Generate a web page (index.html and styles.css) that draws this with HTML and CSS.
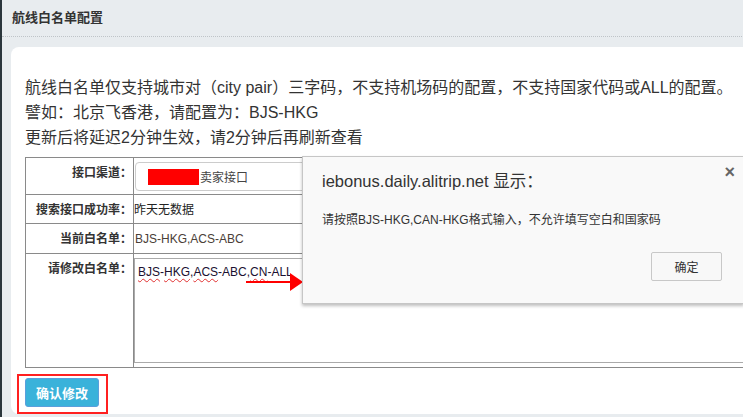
FILE: index.html
```html
<!DOCTYPE html>
<html lang="zh-CN">
<head>
<meta charset="utf-8">
<title>航线白名单配置</title>
<link rel="stylesheet" href="styles.css">
</head>
<body>
<div class="page">
  <div class="header">航线白名单配置</div>
  <div class="card">
    <p class="notes">航线白名单仅支持城市对（city pair）三字码，不支持机场码的配置，不支持国家代码或ALL的配置。<br>譬如：北京飞香港，请配置为：BJS-HKG<br>更新后将延迟2分钟生效，请2分钟后再刷新查看</p>
    <table class="form">
      <tr class="r1">
        <th>接口渠道：</th>
        <td><div class="select"><span class="redact"></span>卖家接口</div></td>
      </tr>
      <tr class="r2">
        <th>搜索接口成功率：</th>
        <td><span class="plain">昨天无数据</span></td>
      </tr>
      <tr class="r3">
        <th>当前白名单：</th>
        <td><span class="current">BJS-HKG,ACS-ABC</span></td>
      </tr>
      <tr class="r4">
        <th>请修改白名单：</th>
        <td><div class="textarea"><span class="sp">BJS</span>-<span class="sp">HKG</span>,<span class="sp">ACS</span>-ABC,<span class="sp">CN</span>-ALL</div></td>
      </tr>
    </table>
    <div class="actions">
      <span class="highlight"><button class="btn-primary">确认修改</button></span>
    </div>
  </div>
</div>

<svg class="arrow" width="60" height="24" viewBox="0 0 60 24">
  <line x1="0" y1="12" x2="46" y2="12" stroke="#ff0000" stroke-width="2"/>
  <polygon points="44,3 57,12 44,21" fill="#ff0000"/>
</svg>

<div class="dialog">
  <div class="dlg-title">iebonus.daily.alitrip.net 显示：</div>
  <span class="dlg-close">×</span>
  <div class="dlg-msg">请按照BJS-HKG,CAN-HKG格式输入，不允许填写空白和国家码</div>
  <div class="dlg-foot"><button class="btn-ok">确定</button></div>
</div>
</body>
</html>
```
FILE: styles.css
```css
html, body {
  margin: 0;
  padding: 0;
  overflow: hidden;
  width: 743px;
  height: 417px;
}
body {
  font-family: "Liberation Sans", "Noto Sans CJK SC", sans-serif;
  color: #333;
  background: #e8ecef;
}
.page {
  border-left: 2px solid #2b363c;
  height: 417px;
  box-sizing: border-box;
  width: 1000px;
}
.header {
  height: 36px;
  line-height: 36px;
  padding-left: 10px;
  font-size: 13px;
  font-weight: bold;
  color: #333;
  border-bottom: 1px dotted #bfc4c8;
}
.card {
  margin: 10px 0 0 9px;
  background: #fff;
  border-radius: 8px;
  padding: 28px 0 0 14px;
  height: 367px;
  box-sizing: border-box;
}
.notes {
  margin: 0;
  font-size: 16px;
  line-height: 25px;
  color: #333;
}
.form {
  margin-top: 7px;
  width: 900px;
  border-collapse: collapse;
  border: 1px solid #333;
  font-size: 12px;
}
.form th, .form td {
  border: 1px solid #8a8a8a;
  padding: 0;
  vertical-align: top;
}
.form th {
  width: 108px;
  text-align: right;
  font-weight: bold;
  padding-right: 1px;
  padding-top: 8px;
  line-height: 14px;
  box-sizing: border-box;
}
.r1 th, .r1 td { height: 36px; }
.r2 th, .r2 td { height: 28px; }
.r3 th, .r3 td { height: 29px; }
.r4 th, .r4 td { height: 113px; }
.select {
  margin: 4px 0 0 1px;
  height: 29px;
  box-sizing: border-box;
  border: 1px solid #ccc;
  border-radius: 4px;
  padding-left: 12px;
  display: flex;
  align-items: center;
  font-size: 12px;
  color: #444;
}
.redact {
  display: inline-block;
  width: 51px;
  height: 16px;
  background: #ff0000;
  margin-right: 1px;
}
.plain {
  display: block;
  padding-top: 8px;
  line-height: 14px;
  color: #222;
}
.current {
  display: block;
  padding: 8px 0 0 1px;
  line-height: 14px;
  color: #4a4038;
}
.textarea {
  margin: 4px 0 0 0;
  height: 105px;
  box-sizing: border-box;
  border: 1px solid #aaa;
  border-right: 0;
  padding: 6px 0 0 3px;
  color: #1a1030;
  font-size: 12px;
  line-height: 14px;
}
.sp {
  text-decoration: underline wavy #e03030;
  text-decoration-thickness: 1px;
  text-underline-offset: 2px;
}
.actions {
  margin-left: -8px;
  padding-top: 6px;
}
.highlight {
  display: inline-block;
  border: 2px solid #ff2020;
  padding: 2px 7px 5px 6px;
}
.btn-primary {
  display: block;
  width: 74px;
  height: 29px;
  background: #3ab2da;
  border: 1px solid #5a9fdc;
  border-radius: 3px;
  color: #fff;
  font-family: "Liberation Sans", "Noto Sans CJK SC", sans-serif;
  font-size: 13px;
  font-weight: bold;
  padding: 0;
}
.arrow {
  position: absolute;
  left: 246px;
  top: 270px;
}
.dialog {
  position: absolute;
  left: 302px;
  top: 156px;
  width: 442px;
  height: 148px;
  box-sizing: border-box;
  background: #f9f9f9;
  border: 1px solid #c6c6c6;
  box-shadow: 0 2px 3px rgba(0, 0, 0, 0.25);
  padding: 14px 0 0 19px;
}
.dlg-title {
  font-size: 16.5px;
  line-height: 20px;
  color: #333;
}
.dlg-close {
  position: absolute;
  right: 8px;
  top: 5px;
  font-size: 18px;
  font-weight: bold;
  color: #666;
}
.dlg-msg {
  margin-top: 21px;
  font-size: 12px;
  line-height: 16px;
  color: #333;
}
.dlg-foot {
  display: flex;
  justify-content: flex-end;
  padding-right: 21px;
  margin-top: 24px;
}
.btn-ok {
  width: 71px;
  height: 29px;
  background: #f8f8f8;
  border: 1px solid #c8c8c8;
  border-radius: 2px;
  font-family: "Liberation Sans", "Noto Sans CJK SC", sans-serif;
  font-size: 12px;
  color: #333;
  padding: 0;
}
```
